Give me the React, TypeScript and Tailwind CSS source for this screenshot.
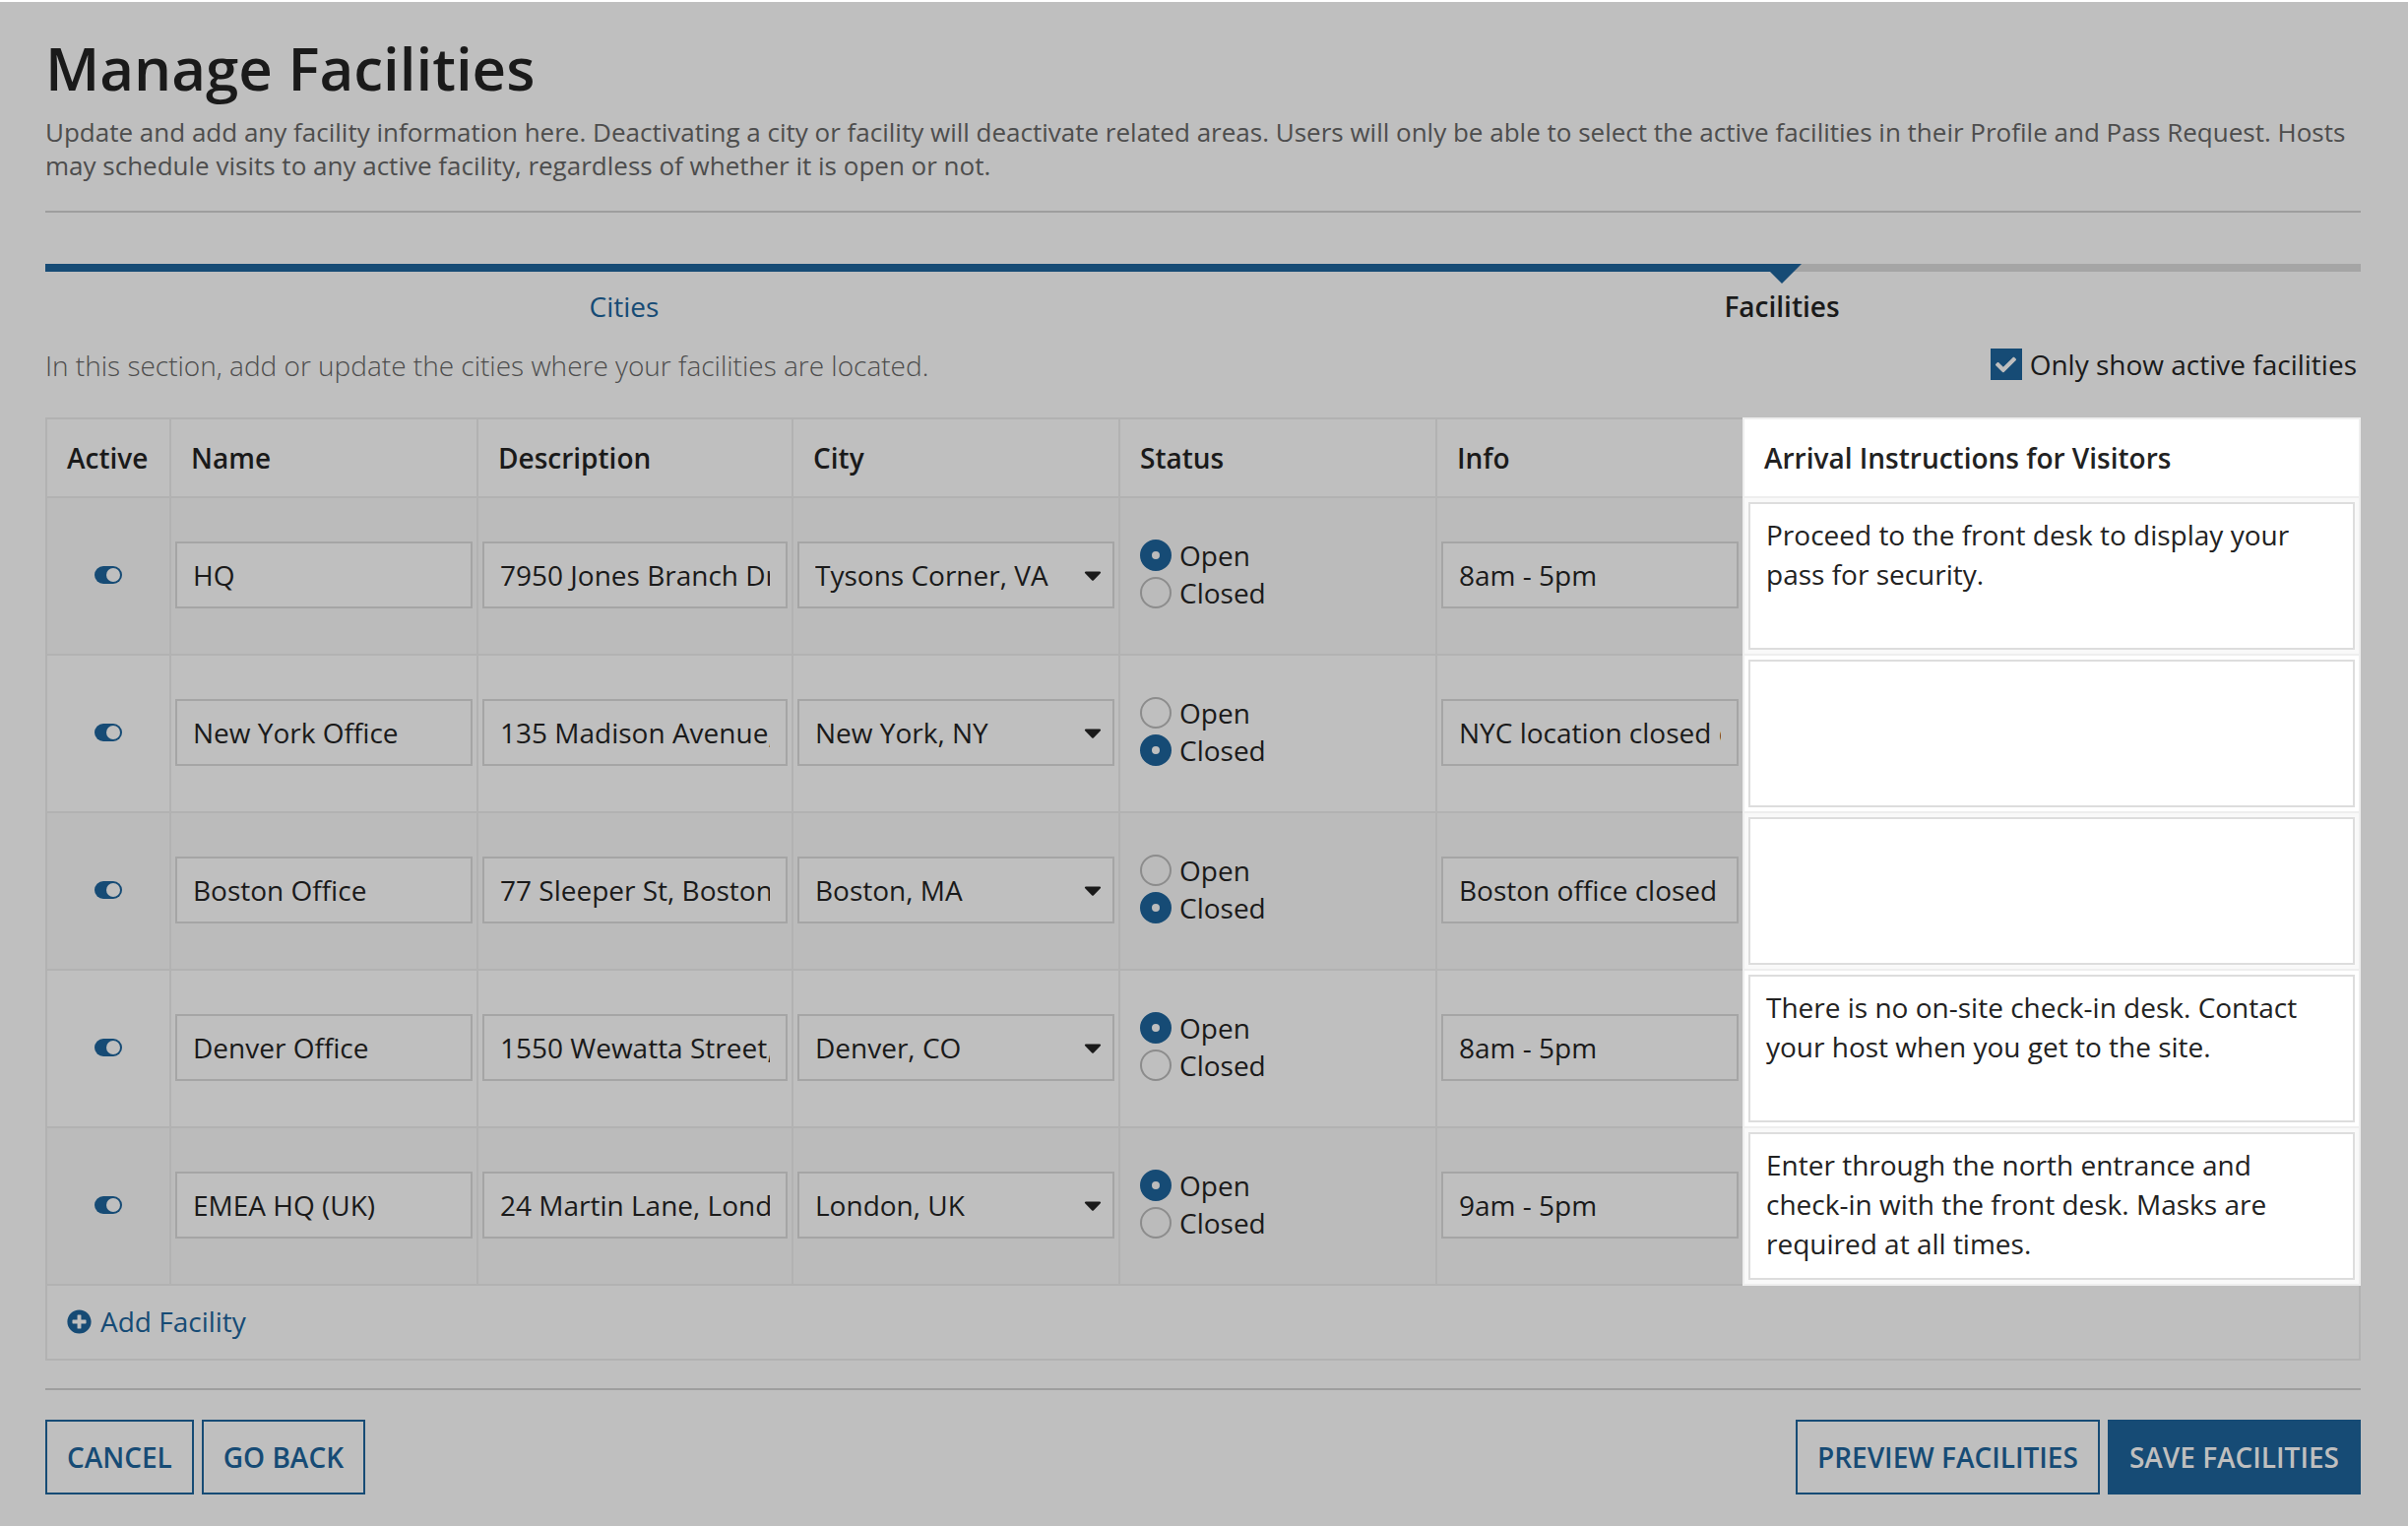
import { useState } from "react";
import { FaCaretDown, FaCheck, FaPlusCircle } from "react-icons/fa";

const CITIES = ["Tysons Corner, VA", "New York, NY", "Boston, MA", "Denver, CO", "London, UK"];

const FACILITIES = [
  {
    id: "hq",
    name: "HQ",
    description: "7950 Jones Branch Drive",
    city: "Tysons Corner, VA",
    status: "Open",
    info: "8am - 5pm",
    arrival: "Proceed to the front desk to display your pass for security.",
  },
  {
    id: "nyc",
    name: "New York Office",
    description: "135 Madison Avenue, New York",
    city: "New York, NY",
    status: "Closed",
    info: "NYC location closed due to weather",
    arrival: "",
  },
  {
    id: "boston",
    name: "Boston Office",
    description: "77 Sleeper St, Boston",
    city: "Boston, MA",
    status: "Closed",
    info: "Boston office closed",
    arrival: "",
  },
  {
    id: "denver",
    name: "Denver Office",
    description: "1550 Wewatta Street, Denver",
    city: "Denver, CO",
    status: "Open",
    info: "8am - 5pm",
    arrival: "There is no on-site check-in desk. Contact your host when you get to the site.",
  },
  {
    id: "emea",
    name: "EMEA HQ (UK)",
    description: "24 Martin Lane, London",
    city: "London, UK",
    status: "Open",
    info: "9am - 5pm",
    arrival:
      "Enter through the north entrance and check-in with the front desk. Masks are required at all times.",
  },
];

type Facility = (typeof FACILITIES)[number];

const th = "h-[82px] border-y-2 border-l-2 border-[#b2b2b2] px-5 text-left font-semibold";
const td = "border-b-2 border-l-2 border-[#b2b2b2] px-1 pt-1 pb-1.5";
const field =
  "block h-[68px] w-full rounded-none border-2 border-[#a5a5a5] bg-[#bfbfbf] px-4 outline-none";
const outlineButton =
  "h-[76px] border-2 border-[#164b75] px-5 font-semibold text-[#164b75] uppercase";

function StatusRadio({ facility, value }: { facility: Facility; value: string }) {
  return (
    <label className="flex h-[38px] items-center gap-2">
      <input
        type="radio"
        name={`status-${facility.id}`}
        value={value}
        defaultChecked={facility.status === value}
        className="size-8 appearance-none rounded-full border-2 border-[#8c8c8c] checked:border-12 checked:border-[#164b75]"
      />
      {value}
    </label>
  );
}

function FacilityRow({ facility }: { facility: Facility }) {
  return (
    <tr className="group odd:bg-[#bbbbbb]">
      <td className={td}>
        <input
          type="checkbox"
          role="switch"
          aria-label={`${facility.name} active`}
          defaultChecked
          className="mx-auto flex h-[18px] w-7 appearance-none items-center rounded-full bg-[#164b75] px-[2px] before:size-[14px] before:rounded-full before:bg-[#bfbfbf] checked:justify-end"
        />
      </td>
      <td className={td}>
        <input type="text" aria-label="Name" defaultValue={facility.name} className={field} />
      </td>
      <td className={td}>
        <input
          type="text"
          aria-label="Description"
          defaultValue={facility.description}
          className={field}
        />
      </td>
      <td className={td}>
        <div className="relative">
          <select
            aria-label="City"
            defaultValue={facility.city}
            className={`${field} appearance-none`}
          >
            {CITIES.map((city) => (
              <option key={city}>{city}</option>
            ))}
          </select>
          <FaCaretDown className="pointer-events-none absolute top-5 right-[13px] h-7 w-[18px]" />
        </div>
      </td>
      <td className="border-b-2 border-l-2 border-[#b2b2b2] px-5 pt-1 pb-2">
        <StatusRadio facility={facility} value="Open" />
        <StatusRadio facility={facility} value="Closed" />
      </td>
      <td className={td}>
        <input type="text" aria-label="Info" defaultValue={facility.info} className={field} />
      </td>
      <td className="border-x-2 border-b-2 border-[#eeeeee] bg-white p-1 group-odd:bg-[#f9f9f9]">
        <textarea
          aria-label="Arrival Instructions for Visitors"
          defaultValue={facility.arrival}
          className="block h-[150px] w-full resize-none overflow-hidden border-2 border-[#dddddd] bg-white px-4 py-[11px] leading-10 text-[#222222] outline-none"
        />
      </td>
    </tr>
  );
}

export default function App() {
  const [onlyActive, setOnlyActive] = useState(true);

  return (
    <main className="min-h-screen border-t-2 border-white bg-[#bfbfbf] pt-8 pr-12 pb-8 pl-[46px] font-['Open_Sans',sans-serif] text-[28px] leading-[38px] text-[#1a1a1a]">
      <header className="border-b-2 border-[#9e9e9e] pb-[29px]">
        <h1 className="mb-[13px] text-[60px] leading-[70px] font-semibold">Manage Facilities</h1>
        <p className="text-[26px] leading-[34px] text-[#4d4d4d]">
          Update and add any facility information here. Deactivating a city or facility will
          deactivate related areas. Users will only be able to select the active facilities in their
          Profile and Pass Request. Hosts may schedule visits to any active facility, regardless of
          whether it is open or not.
        </p>
      </header>

      <nav aria-label="Steps" className="mt-[52px]">
        <div className="h-2 bg-[#a5a5a5]">
          <div className="relative h-2 w-3/4 bg-[#164b75]">
            <svg
              viewBox="0 0 40 20"
              className="absolute top-0 right-0 h-5 w-10 translate-x-1/2 fill-[#164b75]"
            >
              <path d="M0 0h40L20 20z" />
            </svg>
          </div>
        </div>
        <ol className="mt-4 grid grid-cols-2 text-center">
          <li>
            <a href="#cities" className="text-[#164b75]">
              Cities
            </a>
          </li>
          <li className="font-semibold" aria-current="step">
            Facilities
          </li>
        </ol>
      </nav>

      <div className="mt-5 mr-1 flex h-10 justify-between">
        <p className="self-end font-light text-[#4d4d4d]">
          In this section, add or update the cities where your facilities are located.
        </p>
        <label className="flex items-center gap-2">
          <span className="grid place-items-center">
            <input
              type="checkbox"
              checked={onlyActive}
              onChange={(e) => setOnlyActive(e.target.checked)}
              className="col-start-1 row-start-1 size-8 appearance-none border-2 border-[#8c8c8c] checked:border-[#164b75] checked:bg-[#164b75]"
            />
            {onlyActive && (
              <FaCheck className="pointer-events-none col-start-1 row-start-1 size-[21px] text-[#bfbfbf]" />
            )}
          </span>
          Only show active facilities
        </label>
      </div>

      <table className="mt-[34px] w-full table-fixed border-separate border-spacing-0">
        <colgroup>
          <col className="w-[126px]" />
          <col className="w-[312px]" />
          <col className="w-[320px]" />
          <col className="w-[332px]" />
          <col className="w-[322px]" />
          <col className="w-[312px]" />
          <col />
        </colgroup>
        <thead>
          <tr>
            <th className={th}>Active</th>
            <th className={th}>Name</th>
            <th className={th}>Description</th>
            <th className={th}>City</th>
            <th className={th}>Status</th>
            <th className={th}>Info</th>
            <th className="border-2 border-[#eeeeee] bg-white px-5 text-left font-semibold text-[#222222]">
              Arrival Instructions for Visitors
            </th>
          </tr>
        </thead>
        <tbody>
          {FACILITIES.map((facility) => (
            <FacilityRow key={facility.id} facility={facility} />
          ))}
        </tbody>
        <tfoot>
          <tr>
            <td colSpan={7} className="h-[76px] border-x-2 border-b-2 border-[#b2b2b2] px-5 pb-[2px]">
              <button type="button" className="flex items-center gap-[9px] text-[#164b75]">
                <FaPlusCircle className="size-[25px]" />
                Add Facility
              </button>
            </td>
          </tr>
        </tfoot>
      </table>

      <footer className="mt-7 flex justify-between border-t-2 border-[#9e9e9e] pt-[30px]">
        <div className="flex gap-2">
          <button type="button" className={outlineButton}>
            Cancel
          </button>
          <button type="button" className={outlineButton}>
            Go Back
          </button>
        </div>
        <div className="flex gap-2">
          <button type="button" className={outlineButton}>
            Preview Facilities
          </button>
          <button
            type="submit"
            className="h-[76px] border-2 border-[#164b75] bg-[#164b75] px-5 font-semibold text-[#bfbfbf] uppercase"
          >
            Save Facilities
          </button>
        </div>
      </footer>
    </main>
  );
}
